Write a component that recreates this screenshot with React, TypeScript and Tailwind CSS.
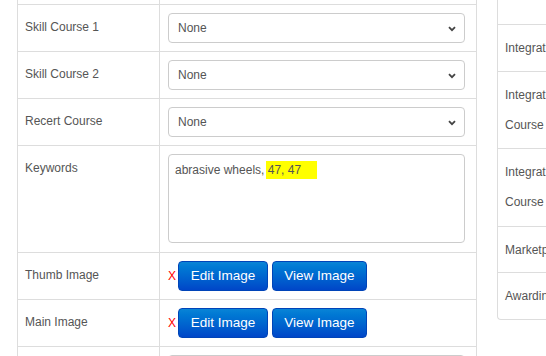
import React from 'react';

const font = "font-['Liberation_Sans',Arial,Helvetica,sans-serif]";

function Chevron() {
  return (
    <svg className="absolute right-[8px] top-[12px] w-[8px] h-[6px]" viewBox="0 0 8 6">
      <path d="M1 1.2 L4 4.2 L7 1.2" fill="none" stroke="#444" strokeWidth="1.8" />
    </svg>
  );
}

function SelectBox({ value }: { value: string }) {
  return (
    <div className="relative w-[297px] h-[30px] border border-[#ccc] rounded-[4px] bg-white flex items-center pl-[9px] text-[#555] text-[12px]">
      {value}
      <Chevron />
    </div>
  );
}

function Row({ label, h = 'h-[47px]', children }: { label: string; h?: string; children: React.ReactNode }) {
  return (
    <div className={`flex border-b border-[#ddd] ${h}`}>
      <div className="w-[142px] border-r border-[#ddd] pl-[7px] pt-[14px] leading-[17px] text-[#555]">{label}</div>
      <div className="flex-1 pl-[8px] pt-[8px]">{children}</div>
    </div>
  );
}

function ImageButtons() {
  return (
    <div className="flex items-center h-[30px]">
      <span className="text-[#f00] text-[12px] w-[10px]">X</span>
      <button className="w-[90px] h-[30px] rounded-[4px] bg-gradient-to-b from-[#0a84d6] to-[#0046c8] border border-[#0044b8] text-white text-[13.5px]">
        Edit Image
      </button>
      <button className="ml-[4px] w-[95px] h-[30px] rounded-[4px] bg-gradient-to-b from-[#0a84d6] to-[#0046c8] border border-[#0044b8] text-white text-[13.5px]">
        View Image
      </button>
    </div>
  );
}

const sideRows = [
  { lines: ['Integration'], h: 'h-[47px]' },
  { lines: ['Integration Test', 'Course'], h: 'h-[77px]' },
  { lines: ['Integration Exam', 'Course'], h: 'h-[78px]' },
  { lines: ['Marketplace'], h: 'h-[46px]' },
  { lines: ['Awarding Body'], h: 'h-[47px]' },
];

export default function App() {
  return (
    <div className={`w-[546px] h-[356px] overflow-hidden bg-white flex items-start text-[12px] ${font}`}>
      {/* form table */}
      <div className="ml-[17px] w-[460px] shrink-0 h-[356px] border-x border-[#ddd]">
        <div className="h-[5px] border-b border-[#ddd] flex">
          <div className="w-[142px] border-r border-[#ddd]" />
        </div>
        <Row label="Skill Course 1">
          <SelectBox value="None" />
        </Row>
        <Row label="Skill Course 2">
          <SelectBox value="None" />
        </Row>
        <Row label="Recert Course">
          <SelectBox value="None" />
        </Row>
        <Row label="Keywords" h="h-[107px]">
          <div className="w-[297px] h-[89px] border border-[#ccc] rounded-[4px] px-[6px] pt-[6px] leading-[17px] text-[#555]">
            abrasive wheels,{' '}
            <span className="inline-block -ml-[2px] pl-[2px] pr-[16px] h-[18px] leading-[18px] bg-[#ffff00]">47, 47</span>
          </div>
        </Row>
        <Row label="Thumb Image">
          <ImageButtons />
        </Row>
        <Row label="Main Image">
          <ImageButtons />
        </Row>
        <Row label="">
          <SelectBox value="" />
        </Row>
      </div>

      {/* side card */}
      <div className="ml-[20px] w-[120px] shrink-0 border-l border-b border-[#ddd] rounded-bl-[4px] text-[#555] whitespace-nowrap overflow-hidden">
        <div className="h-[24px]" />
        {sideRows.map((r, i) => (
          <div key={i} className={`border-t border-[#ddd] pl-[7px] pt-[8px] leading-[30px] ${r.h}`}>
            {r.lines.map((l) => (
              <div key={l}>{l}</div>
            ))}
          </div>
        ))}
      </div>
    </div>
  );
}
